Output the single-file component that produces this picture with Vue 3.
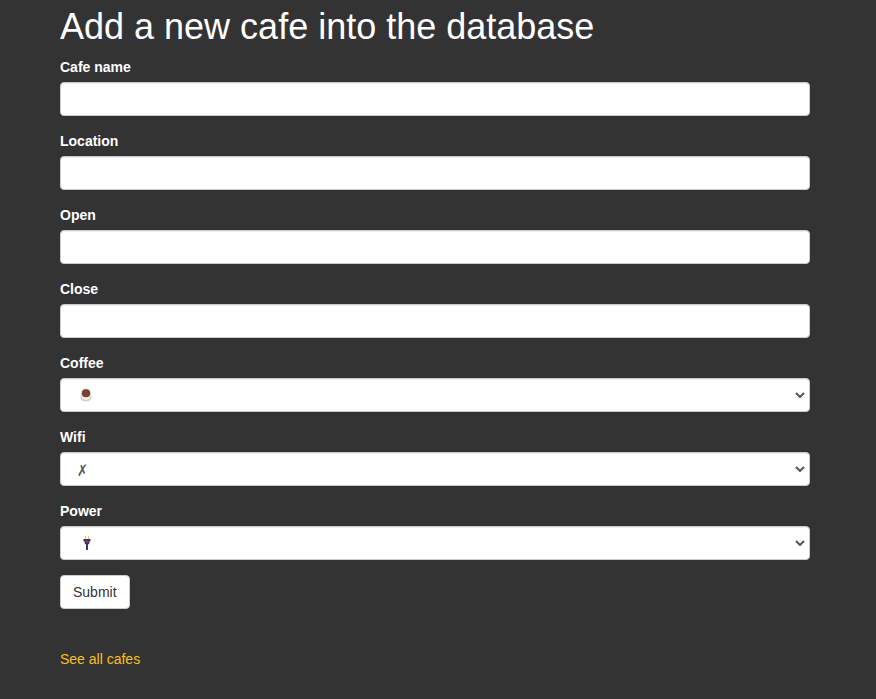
<script setup>
const inputs = ['Cafe name', 'Location', 'Open', 'Close']
const selects = ['Coffee', 'Wifi', 'Power']
</script>

<template>
  <main class="container">
    <h1>Add a new cafe into the database</h1>
    <form @submit.prevent>
      <div v-for="name in inputs" :key="name" class="group">
        <label :for="name">{{ name }}</label>
        <input :id="name" class="control" type="text" />
      </div>
      <div v-for="name in selects" :key="name" class="group">
        <label>{{ name }}</label>
        <div class="control select" tabindex="0">
          <svg v-if="name === 'Coffee'" class="icon" width="14" height="14" viewBox="0 0 14 14">
            <ellipse cx="8" cy="9" rx="5.6" ry="4.5" fill="#d2d0d1" />
            <path d="M3.4 5.5h9.2v2.3a4.6 4.3 0 0 1-9.2 0z" fill="#efedee" />
            <ellipse cx="8" cy="5.2" rx="4.8" ry="4.4" fill="#c9c2c1" />
            <ellipse cx="8" cy="5.2" rx="4.1" ry="3.9" fill="#7b412f" />
          </svg>
          <span v-else-if="name === 'Wifi'" class="cross">✗</span>
          <svg v-else class="icon" width="14" height="14" viewBox="0 0 14 14">
            <path d="M7.5 0v3.5M10.5 0v3.5" stroke="#efb77c" />
            <path d="M5.5 3h7v2.2h-.8L11 8.2H7L6.3 5.2h-.8z" fill="#493060" />
            <path d="M7.7 5.5h2.6" stroke="#75618a" />
            <path d="M9 8v6" stroke="#493060" stroke-width="2" />
          </svg>
          <svg class="chevron" width="10" height="6" viewBox="0 0 10 6">
            <path d="M1 1l4 4 4-4" fill="none" stroke="#555" stroke-width="2" />
          </svg>
        </div>
      </div>
      <button type="submit">Submit</button>
    </form>
    <a href="#">See all cafes</a>
  </main>
</template>

<style>
body {
  background: #333;
}
</style>

<style scoped>
.container {
  box-sizing: border-box;
  width: 870px;
  padding: 7px 60px 0;
  font: 14px/20px "Liberation Sans", Arial, sans-serif;
  color: #fff;
}
h1 {
  margin: 0 0 10px;
  font-size: 36px;
  font-weight: 500;
  line-height: 40px;
}
.group {
  margin-bottom: 15px;
}
label {
  display: block;
  margin-bottom: 5px;
  font-weight: 700;
}
.control {
  box-sizing: border-box;
  display: block;
  width: 100%;
  height: 34px;
  padding: 6px 12px;
  font: inherit;
  color: #555;
  background: #fff;
  border: 1px solid #ccc;
  border-radius: 4px;
  box-shadow: inset 0 1px 1px rgba(0, 0, 0, 0.075);
}
.select {
  display: flex;
  align-items: center;
  justify-content: space-between;
  padding: 0 4px 0 17px;
}
.cross {
  margin-left: -1px;
  transform: translateY(1px) scale(0.92, 1.14);
}
button {
  display: block;
  height: 34px;
  padding: 6px 12px;
  font: inherit;
  color: #333;
  background: #fff;
  border: 1px solid #ccc;
  border-radius: 4px;
}
a {
  display: inline-block;
  margin-top: 40px;
  color: #ffc107;
  text-decoration: none;
}
</style>
